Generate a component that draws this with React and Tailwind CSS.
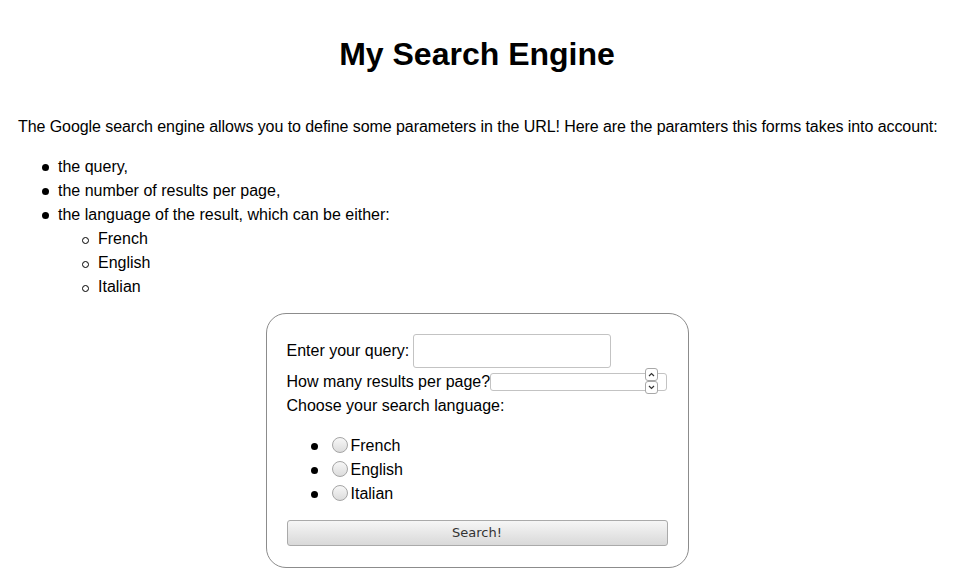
import React from 'react';

const Disc = () => (
  <span className="inline-block align-[1px] -ml-[16px] mr-[9px] w-[7px] h-[7px] rounded-full bg-black" />
);

const Circle = () => (
  <span className="inline-block align-[0px] -ml-[16px] mr-[9px] w-[7px] h-[7px] rounded-full border border-black" />
);

const Radio = () => (
  <span className="inline-block align-[-2px] ml-[5px] mr-[3px] w-[16px] h-[16px] rounded-full border border-[#a5a5a5] bg-gradient-to-b from-[#f7f7f7] to-[#dcdcdc]" />
);

const NumberField = () => (
  <span className="relative inline-block align-middle w-[177px] h-[18px] border border-[#c3c3c3] rounded-[3px] bg-white">
    {/* spinner sits over the field's right end */}
    <span className="absolute right-[8px] top-[-6px] flex flex-col bg-white">
      <span className="w-[13px] h-[13px] border border-[#a8a8a8] rounded-[3px] flex items-center justify-center">
        <svg width="7" height="5" viewBox="0 0 7 5"><path d="M1 4 L3.5 1.5 L6 4" fill="none" stroke="#333" strokeWidth="1.2" /></svg>
      </span>
      <span className="w-[13px] h-[13px] border border-[#a8a8a8] rounded-[3px] flex items-center justify-center">
        <svg width="7" height="5" viewBox="0 0 7 5"><path d="M1 1 L3.5 3.5 L6 1" fill="none" stroke="#333" strokeWidth="1.2" /></svg>
      </span>
    </span>
  </span>
);

const App = () => {
  const languages = ['French', 'English', 'Italian'];

  return (
    <div className="min-h-screen bg-white text-black px-[18px] pt-[30px] font-['Liberation_Sans',Arial,sans-serif] text-[16px] leading-[24px]">
      <h1 className="text-center text-[32px] leading-[48px] font-bold">My Search Engine</h1>

      <p className="mt-[37px] whitespace-nowrap tracking-[-0.07px]">
        The Google search engine allows you to define some parameters in the URL! Here are the paramters this forms takes into account:
      </p>

      <ul className="mt-4 pl-10">
        <li><Disc />the query,</li>
        <li><Disc />the number of results per page,</li>
        <li>
          <Disc />
          the language of the result, which can be either:
          <ul className="pl-10">
            {languages.map(l => <li key={l}><Circle />{l}</li>)}
          </ul>
        </li>
      </ul>

      {/* Search form */}
      <form className="mt-[14px] mx-auto w-[423px] border border-[#8c8c8c] rounded-[20px] px-5 pt-5 pb-[21px]" onSubmit={e => e.preventDefault()}>
        <div className="flex items-center">
          <span>Enter your query:</span>
          <span className="ml-[4px] w-[198px] h-[34px] border border-[#c3c3c3] rounded-[3px] bg-white" />
        </div>
        <div className="h-[24px] mt-[2px] flex items-center">
          <span>How many results per page?</span>
          <NumberField />
        </div>
        <div>Choose your search language:</div>

        <ul className="mt-4 mb-[14px] pl-10">
          {languages.map(l => (
            <li key={l}>
              <Disc />
              <Radio />{l}
            </li>
          ))}
        </ul>

        <button
          type="submit"
          className="block w-full h-[26px] border border-[#aaaaaa] rounded-[3px] bg-gradient-to-b from-[#f6f6f6] to-[#d9d9d9] text-[#333] text-[13px] leading-[24px] font-['DejaVu_Sans',sans-serif]"
        >
          Search!
        </button>
      </form>
    </div>
  );
};

export default App;
